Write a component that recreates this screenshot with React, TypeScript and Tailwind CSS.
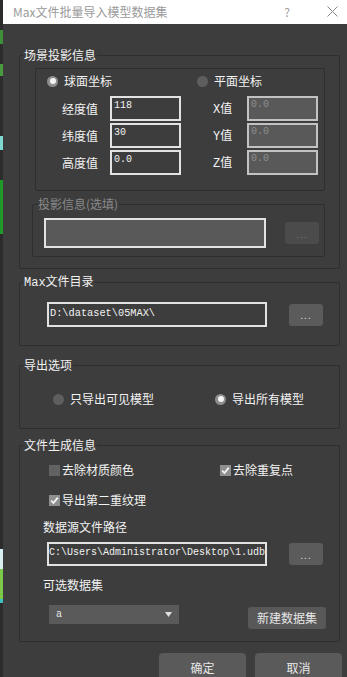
import React from "react";

const cjk = "font-['Noto_Sans_CJK_SC','Noto_Sans',sans-serif]";
const mono = "font-['Liberation_Mono','Noto_Sans_CJK_SC',monospace]";

type GroupProps = {
  title: React.ReactNode;
  className?: string;
  legendClass?: string;
  children: React.ReactNode;
};

const GroupBox = ({ title, className = "", legendClass = "", children }: GroupProps) => {
  return (
    <fieldset className={`border border-[#2e2e2e] rounded-[2px] ${className}`}>
      <legend className={`text-[12px] leading-[16px] ${legendClass}`}>{title}</legend>
      {children}
    </fieldset>
  );
};

const Radio = ({ checked, label }: { checked?: boolean; label: string }) => {
  return (
    <div className="flex items-center h-[16px] gap-[6px]">
      {checked ? (
        <span className="w-[11px] h-[11px] rounded-full bg-[#8e8e8e] flex items-center justify-center">
          <span className="w-[6px] h-[6px] rounded-full bg-[#f4f4f4]"></span>
        </span>
      ) : (
        <span className="w-[11px] h-[11px] rounded-full bg-[#5e5e5e]"></span>
      )}
      <span className="text-[12px] leading-[16px] text-[#f2f2f2]">{label}</span>
    </div>
  );
};

const Check = ({ checked, label }: { checked?: boolean; label: string }) => {
  return (
    <div className="flex items-center h-[16px] gap-[2px]">
      {checked ? (
        <span className="w-[11px] h-[11px] bg-[#8f8f8f] flex items-center justify-center">
          <svg width="9" height="9" viewBox="0 0 9 9">
            <path d="M1.2 4.6 L3.5 7 L7.8 1.6" stroke="#f4f4f4" strokeWidth="1.8" fill="none" />
          </svg>
        </span>
      ) : (
        <span className="w-[11px] h-[11px] bg-[#626262]"></span>
      )}
      <span className="text-[12px] leading-[16px] text-[#f2f2f2]">{label}</span>
    </div>
  );
};

const CoordRow = ({ label, value, axis }: { label: string; value: string; axis: string }) => {
  return (
    <div className="flex items-center h-[25px] pl-[26px]">
      <span className="w-[48px] text-[12px] leading-[16px] text-[#f2f2f2]">{label}</span>
      <div className={`w-[71px] h-[25px] border-2 border-[#e2e2e2] bg-[#3d3d3d] px-[2px] pt-[1px] text-[10px] leading-[14px] text-[#f2f2f2] ${mono}`}>
        {value}
      </div>
      <span className="ml-[32px] w-[34px] text-[12px] leading-[16px] text-[#f2f2f2]">
        <span className={mono}>{axis}</span>值
      </span>
      <div className={`w-[71px] h-[25px] border-2 border-[#c2c2c2] bg-[#595959] px-[2px] text-[10px] leading-[14px] text-[#8e8e8e] ${mono}`}>
        0.0
      </div>
    </div>
  );
};

const DotsButton = ({ disabled }: { disabled?: boolean }) => {
  return (
    <div
      className={`w-[34px] h-[22px] rounded-[3px] flex items-center justify-center text-[10px] tracking-[1px] ${
        disabled ? "bg-[#4b4b4b] text-[#747474]" : "bg-[#5b5b5b] text-[#d8d8d8]"
      }`}
    >
      ...
    </div>
  );
};

const App = () => {
  return (
    <div className={`w-[347px] h-[677px] overflow-hidden flex bg-[#3d3d3d] ${cjk}`}>
      <div className="w-[3px] shrink-0 bg-[#2c2c2c] flex flex-col">
        <div className="h-[30px]"></div>
        <div className="h-[14px] bg-[#3f8f3a]"></div>
        <div className="h-[20px]"></div>
        <div className="h-[12px] bg-[#4a9a40]"></div>
        <div className="h-[60px]"></div>
        <div className="h-[14px] bg-[#7fd8d0]"></div>
        <div className="h-[30px]"></div>
        <div className="h-[54px] bg-[#1f9a2a]"></div>
        <div className="h-[315px]"></div>
        <div className="h-[20px] bg-[#d8f0f0]"></div>
        <div className="h-[30px] bg-[#7cc848]"></div>
        <div className="h-[4px] bg-[#3fc0c0]"></div>
      </div>

      <div className="flex-1 flex flex-col min-w-0">
        <div className="h-[24px] shrink-0 bg-white flex items-center pl-[10px] pr-[9px] pb-[1px]">
          <span className="text-[12px] leading-[16px] text-[#9a9a9a]">Max文件批量导入模型数据集</span>
          <span className="ml-auto text-[12px] leading-[16px] text-[#a0a0a0]">?</span>
          <svg className="ml-[37px]" width="11" height="11" viewBox="0 0 11 11">
            <path d="M0.5 0.5 L10.5 10.5 M10.5 0.5 L0.5 10.5" stroke="#8a8a8a" strokeWidth="1" />
          </svg>
        </div>

        <div className="flex flex-col pl-[16px] pr-[7px]">
          <GroupBox title="场景投影信息" className="mt-[23px] pb-[11px]" legendClass="ml-[3px] px-[1px] text-[#f2f2f2]">
            <div className="mt-[5px] ml-[15px] mr-[14px] border border-[#2e2e2e] rounded-[2px] pt-[4px] pb-[15px]">
              <div className="flex pl-[11px]">
                <div className="w-[150px]">
                  <Radio checked label="球面坐标" />
                </div>
                <Radio label="平面坐标" />
              </div>
              <div className="mt-[7px] flex flex-col gap-[2px]">
                <CoordRow label="经度值" value="118" axis="X" />
                <CoordRow label="纬度值" value="30" axis="Y" />
                <CoordRow label="高度值" value="0.0" axis="Z" />
              </div>
            </div>

            <GroupBox title="投影信息(选填)" className="mt-[5px] ml-[12px] mr-[14px] pb-[8px]" legendClass="ml-[5px] text-[#8a8a8a]">
              <div className="mt-[6px] flex items-center pl-[11px]">
                <div className="w-[222px] h-[30px] border-2 border-[#e2e2e2] bg-[#595959]"></div>
                <div className="ml-[19px]">
                  <DotsButton disabled />
                </div>
              </div>
            </GroupBox>
          </GroupBox>

          <GroupBox
            title={
              <>
                <span className={mono}>Max</span>文件目录
              </>
            }
            className="mt-[4px] pb-[18px]"
            legendClass="ml-[3px] px-[1px] text-[#f2f2f2]"
          >
            <div className="mt-[11px] flex items-center pl-[27px]">
              <div className={`w-[220px] h-[25px] border-2 border-[#e2e2e2] bg-[#3d3d3d] px-[1px] pt-[2px] text-[10.3px] leading-[14px] text-[#f2f2f2] ${mono}`}>
                D:\dataset\05MAX\
              </div>
              <div className="ml-[22px]">
                <DotsButton />
              </div>
            </div>
          </GroupBox>

          <GroupBox title="导出选项" className="mt-[11px] pb-[21px]" legendClass="ml-[3px] px-[1px] text-[#f2f2f2]">
            <div className="mt-[18px] flex pl-[33px]">
              <div className="w-[162px]">
                <Radio label="只导出可见模型" />
              </div>
              <Radio checked label="导出所有模型" />
            </div>
          </GroupBox>

          <GroupBox title="文件生成信息" className="mt-[8px] pb-[12px]" legendClass="ml-[3px] px-[1px] text-[#f2f2f2]">
            <div className="mt-[9px] flex pl-[29px]">
              <div className="w-[171px]">
                <Check label="去除材质颜色" />
              </div>
              <Check checked label="去除重复点" />
            </div>
            <div className="mt-[14px] flex pl-[29px]">
              <Check checked label="导出第二重纹理" />
            </div>
            <div className="mt-[11px] pl-[23px] text-[12px] leading-[16px] text-[#f2f2f2]">数据源文件路径</div>
            <div className="mt-[7px] flex items-center pl-[27px]">
              <div className={`w-[220px] h-[24px] border-2 border-[#e2e2e2] bg-[#3d3d3d] pt-[2px] whitespace-nowrap overflow-hidden text-[10px] leading-[14px] text-[#f2f2f2] ${mono}`}>
                C:\Users\Administrator\Desktop\1.udb
              </div>
              <div className="ml-[22px]">
                <DotsButton />
              </div>
            </div>
            <div className="mt-[11px] pl-[23px] text-[12px] leading-[16px] text-[#f2f2f2]">可选数据集</div>
            <div className="mt-[12px] flex items-start pl-[29px]">
              <div className="w-[130px] h-[19px] bg-[#5a5a5a] flex items-center pl-[7px] pr-[7px]">
                <span className={`text-[10px] leading-[14px] text-[#e8e8e8] ${mono}`}>a</span>
                <svg className="ml-auto" width="7" height="5" viewBox="0 0 7 5">
                  <path d="M0 0 H7 L3.5 5 Z" fill="#e0e0e0" />
                </svg>
              </div>
              <div className="ml-[69px] mt-[2px] w-[78px] h-[22px] rounded-[3px] bg-[#585858] flex items-center justify-center text-[12px] leading-[16px] text-[#e6e6e6]">
                新建数据集
              </div>
            </div>
          </GroupBox>

          <div className="mt-[11px] flex gap-[9px] pl-[140px]">
            <div className="w-[87px] h-[32px] shrink-0 rounded-[4px] bg-[#5a5a5a] flex items-center justify-center pb-[2px] text-[12px] leading-[16px] text-[#e8e8e8]">
              确定
            </div>
            <div className="w-[87px] h-[32px] shrink-0 rounded-[4px] bg-[#5a5a5a] flex items-center justify-center pb-[2px] text-[12px] leading-[16px] text-[#e8e8e8]">
              取消
            </div>
          </div>
        </div>
      </div>
    </div>
  );
};

export default App;
